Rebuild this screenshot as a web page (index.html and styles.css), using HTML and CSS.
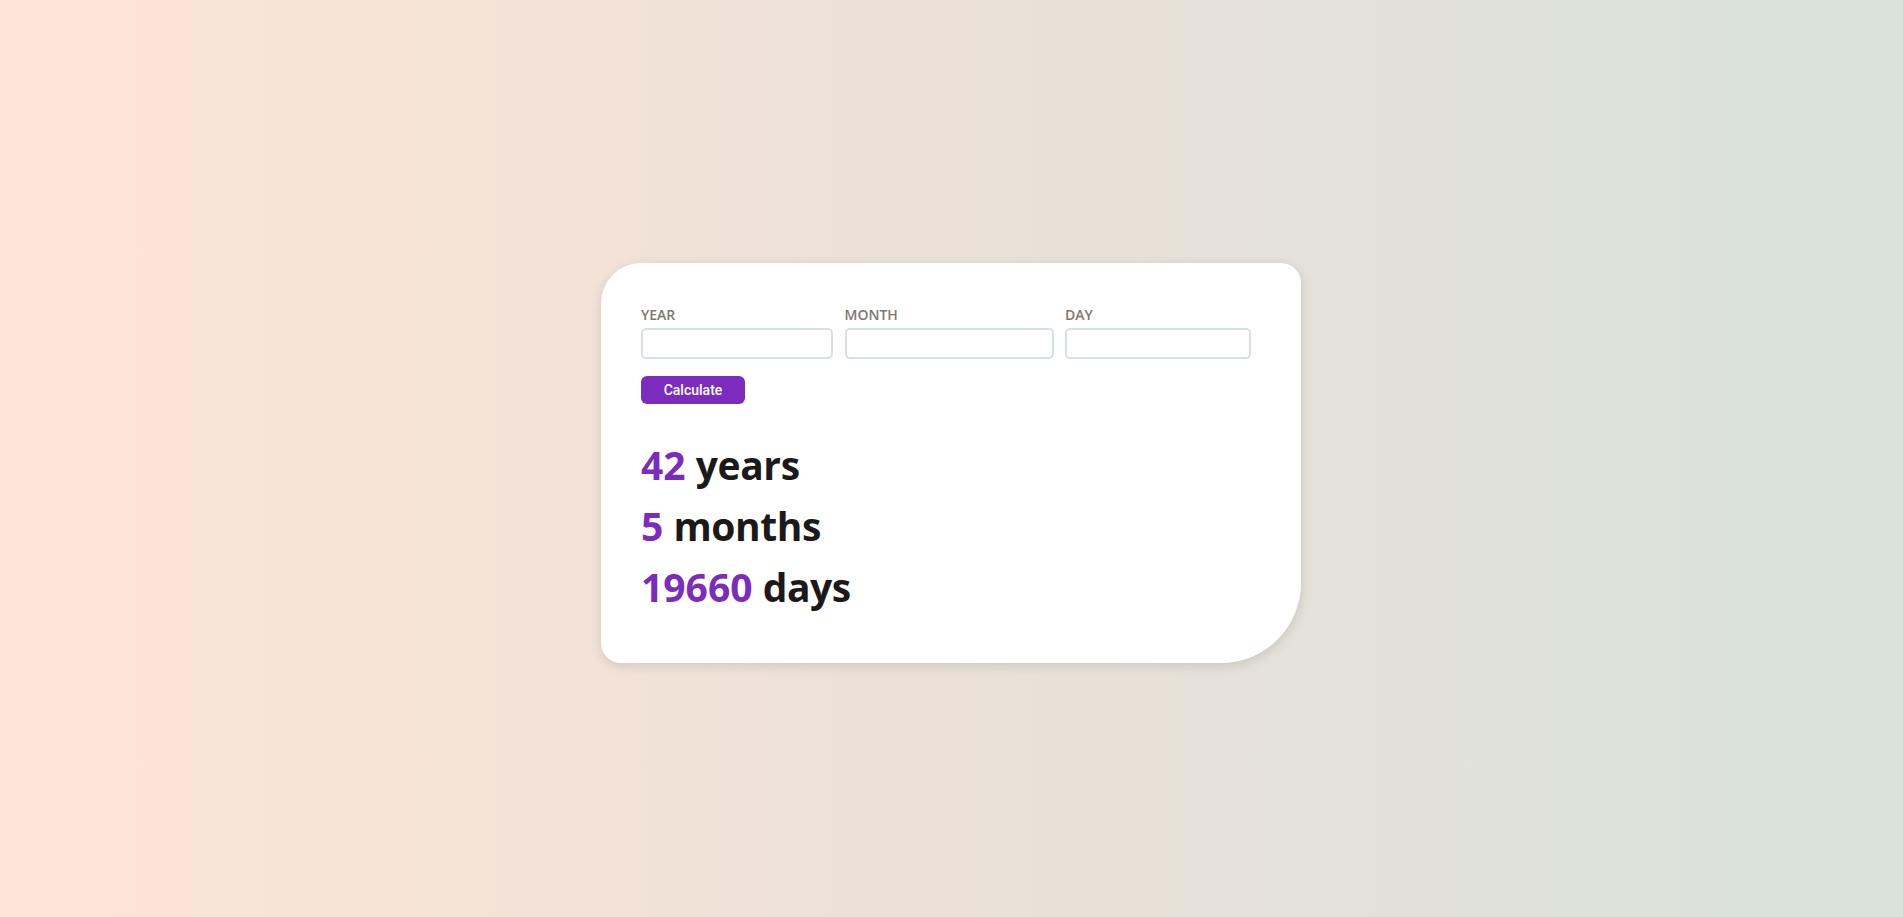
FILE: index.html
```html
<!DOCTYPE html>
<html lang="en">
<head>
<meta charset="utf-8">
<title>Age Calculator</title>
<link rel="stylesheet" href="styles.css">
</head>
<body>
<main class="page">
  <section class="card">
    <form class="fields" onsubmit="return false;">
      <div class="field">
        <label class="field-label" for="year">YEAR</label>
        <input class="field-input" id="year" type="text">
      </div>
      <div class="field">
        <label class="field-label" for="month">MONTH</label>
        <input class="field-input" id="month" type="text">
      </div>
      <div class="field">
        <label class="field-label" for="day">DAY</label>
        <input class="field-input" id="day" type="text">
      </div>
    </form>
    <button class="calc-btn" type="button">Calculate</button>
    <div class="results">
      <p class="result"><span class="num">42</span> <span class="unit">years</span></p>
      <p class="result"><span class="num">5</span> <span class="unit">months</span></p>
      <p class="result"><span class="num">19660</span> <span class="unit">days</span></p>
    </div>
  </section>
</main>
</body>
</html>
```

FILE: styles.css
```css
* { box-sizing: border-box; }

html, body {
  margin: 0;
  padding: 0;
}

body {
  font-family: "Open Sans", "Noto Sans", sans-serif;
  background: linear-gradient(to right, #ffe4d9 0%, #ebe1d7 50%, #d8e2dc 100%);
  min-height: 100vh;
}

.page {
  min-height: 100vh;
  display: flex;
  align-items: center;
  justify-content: center;
  padding-top: 9px;
  padding-right: 1px;
}

.card {
  width: 700px;
  background: #ffffff;
  border-radius: 40px 20px 80px 20px;
  padding: 42px 40px 46px 40px;
  box-shadow: 0 3px 12px rgba(0, 0, 0, 0.12);
}

.fields {
  display: grid;
  grid-template-columns: 192px 209px 186px;
  column-gap: 11.5px;
  margin: 0;
}

.field {
  display: flex;
  flex-direction: column;
  gap: 4px;
}

.field-label {
  font-size: 14px;
  font-weight: 600;
  color: #7d7773;
  line-height: 19px;
}

.field-input {
  height: 31px;
  border: 2px solid #d8e2dc;
  border-radius: 5px;
  background: #fff;
  font: inherit;
  padding: 0 8px;
  outline: none;
}

.calc-btn {
  margin-top: 17px;
  width: 104px;
  height: 28px;
  border: none;
  border-radius: 6px;
  background: #7b2cbf;
  color: #ffffff;
  font-family: Roboto, "Liberation Sans", sans-serif;
  font-size: 14px;
  font-weight: 500;
  padding: 0;
  cursor: pointer;
}

.results {
  margin-top: 30px;
}

.result {
  margin: 0;
  font-size: 39px;
  font-weight: 700;
  line-height: 61px;
  color: #1a1a1a;
}

.num {
  color: #7b2cbf;
}

.unit {
  letter-spacing: -0.4px;
}
```
